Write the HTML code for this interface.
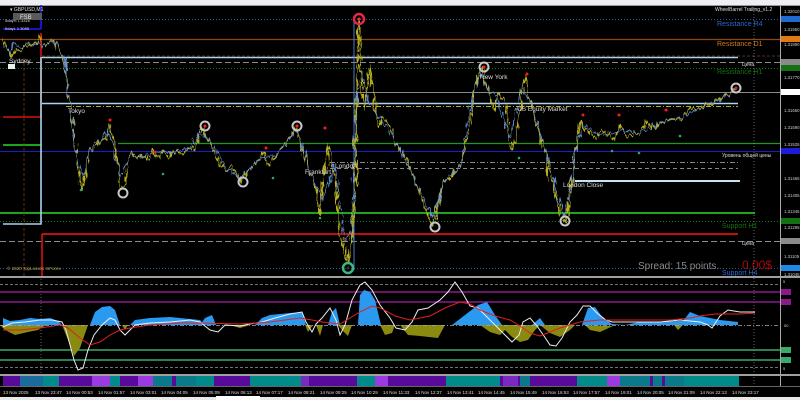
<!DOCTYPE html>
<html><head><meta charset="utf-8"><style>
html,body{margin:0;padding:0;background:#000;width:800px;height:400px;overflow:hidden}
svg{display:block;font-family:"Liberation Sans",sans-serif}
</style></head><body>
<svg width="800" height="400" viewBox="0 0 800 400" xmlns="http://www.w3.org/2000/svg">
<defs>
<filter id="jag" x="-5%" y="-10%" width="110%" height="120%">
<feTurbulence type="fractalNoise" baseFrequency="0.35 0.08" numOctaves="2" seed="3" result="n"/>
<feDisplacementMap in="SourceGraphic" in2="n" scale="9" xChannelSelector="R" yChannelSelector="G"/>
</filter>
</defs>
<rect width="800" height="400" fill="#000"/>
<rect x="0" y="0" width="800" height="5" fill="#eceef2"/>
<rect x="0" y="5" width="800" height="1" fill="#9a9a9a"/>
<line x1="0" y1="19.5" x2="780" y2="19.5" stroke="#1e5aa8" stroke-width="1" stroke-dasharray="1,2"/>
<line x1="0" y1="39.5" x2="780" y2="39.5" stroke="#8b4a14" stroke-width="1.2"/>
<line x1="42" y1="57.5" x2="738" y2="57.5" stroke="#a8d4ee" stroke-width="1.6"/>
<line x1="42" y1="56" x2="780" y2="56" stroke="#704030" stroke-width="0.8" stroke-dasharray="3,2"/>
<line x1="0" y1="62.5" x2="780" y2="62.5" stroke="#8a8a8a" stroke-width="1" stroke-dasharray="6,3"/>
<line x1="0" y1="68.5" x2="780" y2="68.5" stroke="#0a7a0a" stroke-width="1" stroke-dasharray="1,2"/>
<line x1="0" y1="92.5" x2="780" y2="92.5" stroke="#8a8a8a" stroke-width="0.9"/>
<line x1="42" y1="103.5" x2="738" y2="103.5" stroke="#a8d4ee" stroke-width="1.6"/>
<line x1="66" y1="106.5" x2="738" y2="106.5" stroke="#b8b020" stroke-width="1" stroke-dasharray="5,2,1,2"/>
<line x1="3" y1="145" x2="41" y2="145" stroke="#22dd22" stroke-width="1.6"/>
<line x1="118" y1="143.5" x2="780" y2="143.5" stroke="#1a9a1a" stroke-width="1.2"/>
<line x1="0" y1="151.5" x2="780" y2="151.5" stroke="#1c1cc8" stroke-width="1"/>
<line x1="330" y1="162.5" x2="738" y2="162.5" stroke="#888" stroke-width="1" stroke-dasharray="5,2,1,2"/>
<line x1="330" y1="168.5" x2="738" y2="168.5" stroke="#888" stroke-width="1" stroke-dasharray="4,3"/>
<line x1="575" y1="181" x2="740" y2="181" stroke="#c8e4f4" stroke-width="2"/>
<line x1="0" y1="213" x2="755" y2="213" stroke="#22dd22" stroke-width="1.6"/>
<line x1="0" y1="221.5" x2="780" y2="221.5" stroke="#0a7a0a" stroke-width="1" stroke-dasharray="1,2"/>
<line x1="42" y1="234" x2="738" y2="234" stroke="#dd1111" stroke-width="1.8"/>
<line x1="0" y1="241.5" x2="780" y2="241.5" stroke="#8a8a8a" stroke-width="1" stroke-dasharray="6,3"/>
<line x1="0" y1="268.5" x2="780" y2="268.5" stroke="#1e5aa8" stroke-width="1" stroke-dasharray="1,2"/>
<polyline points="3,117 41,117 41,33" fill="none" stroke="#dd1111" stroke-width="1.6"/>
<polyline points="3,224 41,224 41,57" fill="none" stroke="#a8d4ee" stroke-width="1.6"/>
<line x1="42" y1="234" x2="42" y2="276" stroke="#dd1111" stroke-width="1.6"/>
<line x1="3" y1="29" x2="41" y2="29" stroke="#1c1cff" stroke-width="1.5"/>
<line x1="41" y1="5" x2="41" y2="29" stroke="#1c1cff" stroke-width="1.5"/>
<line x1="24" y1="58" x2="24" y2="276" stroke="#7a3a1a" stroke-width="0.8" stroke-dasharray="3,2"/>
<line x1="41" y1="276" x2="41" y2="375" stroke="#aaa" stroke-width="0.6" stroke-dasharray="1,2"/>
<line x1="354" y1="20" x2="354" y2="270" stroke="#4a78c8" stroke-width="1"/>
<line x1="754" y1="5" x2="754" y2="386" stroke="#aaa" stroke-width="0.6" stroke-dasharray="1,2"/>
<g filter="url(#jag)">
<polyline fill="none" stroke="#b8b020" stroke-width="1.3" stroke-linejoin="round" points="3,38 8,50 12,55 16,48 20,52 25,45 30,46 33,42 37,45 40,35 43,47 48,43 53,39 58,48 63,58 66,72 69,100 72,118 76,152 79,172 82,190 86,168 90,150 95,148 100,142 105,140 110,124 114,140 118,165 121,188 125,185 128,162 133,152 138,158 143,154 148,160 153,150 158,160 163,150 168,158 172,152 177,150 182,156 188,148 193,150 198,138 203,128 207,140 211,142 215,155 220,165 225,170 230,167 236,173 240,182 245,175 250,168 255,164 260,158 264,152 268,165 272,160 277,152 282,148 287,140 292,135 296,128 300,142 304,155 308,168 312,178 316,190 320,215 323,180 326,165 328,145 332,160 336,185 340,235 344,248 348,262 351,240 355,210 357,80 359,20 361,70 364,110 367,90 370,65 373,95 376,115 380,125 385,118 390,128 395,140 400,150 404,155 408,160 412,172 417,185 422,200 427,212 432,225 436,215 440,195 445,178 450,180 455,172 460,165 465,150 470,125 475,90 478,72 482,68 486,82 490,98 494,110 498,92 503,100 507,118 511,150 515,140 519,120 522,90 525,76 528,95 532,110 537,128 541,140 545,152 549,175 553,185 557,200 561,215 565,222 569,205 573,170 577,140 580,120 584,128 590,132 596,140 602,128 608,135 614,140 619,125 623,132 628,138 634,130 640,135 646,120 652,128 658,124 663,122 668,120 674,118 680,120 686,112 692,108 698,110 704,104 710,106 716,100 722,98 728,94 733,90 736,88"/>
<polyline fill="none" stroke="#6a9ae8" stroke-width="1" opacity="0.9" points="5,45 10,52 15,44 22,48 28,42 35,45 45,45 55,42 65,60 70,105 76,155 83,175 92,145 102,140 108,128 120,178 130,155 145,156 160,152 175,152 190,148 200,133 212,142 225,168 240,178 258,160 275,155 290,138 298,130 310,172 322,200 335,165 345,240 352,230 356,100 362,75 368,100 374,110 385,125 400,148 420,190 433,218 445,180 460,168 472,100 480,72 488,90 497,95 510,140 522,86 532,105 545,150 556,190 565,215 575,155 582,125 600,135 620,130 640,133 660,122 680,118 700,108 720,100 735,90"/>
</g>
<g fill="#ff1a1a"><circle cx="110" cy="120" r="1.5"/><circle cx="155" cy="152" r="1.5"/><circle cx="205" cy="126" r="1.5"/><circle cx="266" cy="148" r="1.5"/><circle cx="297" cy="126" r="1.5"/><circle cx="325" cy="128" r="1.5"/><circle cx="484" cy="67" r="1.5"/><circle cx="527" cy="74" r="1.5"/><circle cx="583" cy="115" r="1.5"/><circle cx="619" cy="115" r="1.5"/><circle cx="666" cy="110" r="1.5"/></g>
<g fill="#2aaa6a"><circle cx="81" cy="190" r="1.3"/><circle cx="163" cy="174" r="1.3"/><circle cx="273" cy="178" r="1.3"/><circle cx="320" cy="218" r="1.3"/><circle cx="519" cy="158" r="1.3"/><circle cx="612" cy="151" r="1.3"/><circle cx="639" cy="153" r="1.3"/><circle cx="680" cy="136" r="1.3"/></g>
<g fill="none" stroke="#c8c8c8" stroke-width="2"><circle cx="123" cy="193" r="4.5"/><circle cx="205" cy="126" r="4.5"/><circle cx="243" cy="182" r="4.5"/><circle cx="297" cy="126" r="4.5"/><circle cx="435" cy="227" r="4.5"/><circle cx="484" cy="67" r="4.5"/><circle cx="565" cy="221" r="4.5"/><circle cx="736" cy="88" r="4.5"/></g>
<g fill="#ff1a1a"><circle cx="205" cy="126" r="1.4"/><circle cx="297" cy="126" r="1.4"/><circle cx="484" cy="67" r="1.4"/><circle cx="736" cy="88" r="1.4"/></g>
<circle cx="359" cy="19" r="5" fill="none" stroke="#e0284a" stroke-width="2.5"/><circle cx="359" cy="19" r="1.5" fill="#ff2a2a"/>
<circle cx="348" cy="268" r="5" fill="none" stroke="#3ab880" stroke-width="2.5"/><circle cx="348" cy="268" r="1.5" fill="#333"/>
<g font-size="6.5" fill="#ddd">
<text x="68" y="113">Tokyo</text><text x="9" y="63">Sydney</text>
<text x="480" y="79">New York</text><text x="517" y="111">US Equity Market</text>
<text x="335" y="168">London</text><text x="305" y="174">Frankfurt</text>
<text x="563" y="187">London Close</text>
</g>
<rect x="8" y="64" width="7" height="5" fill="#eee"/>
<g font-size="7">
<text x="717" y="26" fill="#2a6ad0">Resistance R4</text>
<text x="717" y="46" fill="#d87a1a">Resistance D1</text>
<text x="717" y="74" fill="#137013">Resistance H1</text>
<text x="722" y="228" fill="#137013">Support H1</text>
<text x="722" y="275" fill="#2a6ad0">Support H4</text>
</g>
<g font-size="5" fill="#ddd">
<text x="742" y="66">Цена</text><text x="742" y="245">Цена</text>
<text x="722" y="157">Уровень общей цены</text>
<text x="715" y="11">WheelBarrel Trailing_v1.2</text>
<text x="10" y="11">▾ GBPUSD,M1</text>
<text x="5" y="22" font-size="4">5dayH 1.3316</text><text x="5" y="30" font-size="4">5dayL 1.3085</text>
<text x="7" y="270" fill="#c8b040" font-size="4.5">© 2020 TopLosses InForex</text>
</g>
<rect x="13" y="13" width="29" height="7" fill="#5a5a5a"/><text x="20" y="19" font-size="6" fill="#ddd">FSB</text>
<text x="638" y="269" font-size="10" fill="#8a8a8a">Spread: 15 points.</text>
<text x="742" y="269" font-size="12" fill="#a80a0a">0.00$</text>
<rect x="780" y="6" width="1" height="380" fill="#aaa"/>
<g font-size="4.3" fill="#ccc">
<text x="784" y="13">1.32010</text><text x="784" y="31">1.31950</text><text x="784" y="46">1.31890</text><text x="784" y="79">1.31770</text><text x="784" y="112">1.31650</text><text x="784" y="129">1.31590</text><text x="784" y="180">1.31465</text><text x="784" y="197">1.31405</text><text x="784" y="213">1.31345</text><text x="784" y="229">1.31285</text><text x="784" y="258">1.31105</text><text x="784" y="276">1.31045</text><text x="784" y="146">1.31525</text>
</g>
<rect x="781" y="16" width="19" height="6" fill="#1e6ad0"/><rect x="781" y="36" width="19" height="6" fill="#e07a10"/><rect x="781" y="59" width="19" height="6" fill="#8a8a8a"/><rect x="781" y="65" width="19" height="6" fill="#137013"/><rect x="781" y="89" width="19" height="6" fill="#fff"/><rect x="781" y="148" width="19" height="6" fill="#1c1cd8"/><rect x="781" y="218" width="19" height="6" fill="#137013"/><rect x="781" y="238" width="19" height="6" fill="#8a8a8a"/><rect x="781" y="265" width="19" height="6" fill="#1e8ae8"/>
<rect x="0" y="276" width="800" height="2" fill="#a0a0a0"/>
<line x1="0" y1="284.5" x2="780" y2="284.5" stroke="#999" stroke-dasharray="3,2" stroke-width="0.8"/>
<line x1="0" y1="292" x2="780" y2="292" stroke="#8a1a8a" stroke-width="1.4"/>
<line x1="0" y1="302" x2="780" y2="302" stroke="#8a1a8a" stroke-width="1.4"/>
<line x1="0" y1="350" x2="780" y2="350" stroke="#3aaa6a" stroke-width="1.4"/>
<line x1="0" y1="360" x2="780" y2="360" stroke="#3aaa6a" stroke-width="1.4"/>
<line x1="0" y1="367.5" x2="780" y2="367.5" stroke="#999" stroke-dasharray="3,2" stroke-width="0.8"/>
<path fill="#2a9af0" d="M3,325 L3,318 10,321 20,320 30,318 40,319 50,318 58,321 62,325 Z M90,325 L95,312 102,307 110,306 115,310 120,325 Z M130,325 L135,320 150,318 170,317 190,319 200,320 205,325 Z M200,325 L205,318 212,315 216,325Z M255,325 L262,318 270,315 280,314 290,313 302,312 306,325Z M328,325 L332,312 336,308 340,325Z M358,325 L360,295 364,290 370,292 375,300 381,325Z M452,325 L465,315 478,305 487,302 495,315 502,325Z M532,325 L540,318 545,325Z M582,325 L588,308 595,307 603,318 612,324 625,325Z M625,325 L640,322 720,320 738,322 738,325 Z M680,325 L690,312 700,316 720,320Z"/>
<path fill="#8a8a10" d="M62,325 L68,340 74,356 80,348 88,325Z M122,325 L125,330 128,325Z M220,325 L230,325 240,328 250,325Z M305,325 L308,332 313,325Z M316,325 L320,336 323,325Z M338,325 L342,330 348,336 352,325Z M400,325 L408,335 420,336 438,338 445,325Z M540,325 L550,333 560,337 570,330 575,325Z M585,325 L590,330 600,332 613,326Z M674,325 L678,330 683,325Z M480,325 L490,332 500,335 505,330 512,337 520,342 528,340 535,330 540,325Z M380,325 L385,335 392,333 395,325Z M0,325 L5,330 15,335 28,332 38,330 46,325Z"/>
<line x1="0" y1="325.5" x2="780" y2="325.5" stroke="#aaa" stroke-dasharray="4,2,1,2" stroke-width="0.8"/>
<polyline fill="none" stroke="#eee" stroke-width="1" points="3,327 12,323 25,322 40,320 52,320 62,322 66,330 70,345 74,360 78,370 83,368 88,350 94,335 102,325 110,318 115,320 120,330 125,335 130,330 135,325 150,323 170,322 190,320 200,322 210,330 218,332 225,325 240,326 250,324 262,322 275,318 290,314 302,312 306,322 312,332 316,324 322,318 330,308 336,320 340,335 345,325 352,300 360,285 365,282 372,290 380,305 390,318 396,328 405,330 412,322 418,310 428,308 440,300 448,292 455,282 462,292 470,306 478,308 485,315 492,322 498,328 505,335 512,342 519,335 523,322 530,318 537,326 544,336 550,345 556,346 562,338 570,322 577,315 583,306 590,306 598,314 606,320 612,322 620,322 640,322 660,322 680,320 700,322 708,325 712,328 720,316 728,310 740,312 755,312"/>
<polyline fill="none" stroke="#e02020" stroke-width="1" points="3,330 20,330 40,328 60,325 68,328 80,338 90,345 100,342 110,335 120,330 130,328 150,325 180,323 200,323 240,324 270,322 300,318 312,320 322,322 340,324 360,312 372,306 380,308 388,312 395,316 410,320 430,316 445,308 460,302 470,304 480,310 495,316 510,320 520,326 530,333 540,336 550,332 560,328 570,325 580,322 600,320 640,320 670,320 690,318 700,316 715,314 740,314 755,313"/>
<g font-size="4" fill="#ccc"><text x="784" y="327">50</text><text x="783" y="283">5</text><text x="783" y="370">5</text></g>
<rect x="781" y="289" width="10" height="6" fill="#8a1a8a"/><rect x="781" y="299" width="10" height="6" fill="#8a1a8a"/><rect x="781" y="347" width="10" height="6" fill="#3aaa6a"/><rect x="781" y="357" width="10" height="6" fill="#3aaa6a"/>
<rect x="0" y="374" width="800" height="2" fill="#a0a0a0"/>
<g>
<rect x="3" y="376" width="736" height="10" fill="#5a0a9a"/>
<rect x="20" y="376" width="23" height="10" fill="#1a6a9a"/><rect x="43" y="376" width="16" height="10" fill="#008a8a"/>
<rect x="92" y="376" width="18" height="10" fill="#9a3ae0"/><rect x="110" y="376" width="10" height="10" fill="#008a8a"/>
<rect x="138" y="376" width="15" height="10" fill="#9a3ae0"/><rect x="153" y="376" width="43" height="10" fill="#0a7a8a"/><rect x="172" y="376" width="4" height="10" fill="#5a0a9a"/><rect x="196" y="376" width="18" height="10" fill="#008a8a"/>
<rect x="250" y="376" width="51" height="10" fill="#008a8a"/><rect x="301" y="376" width="8" height="10" fill="#7a2ac0"/>
<rect x="357" y="376" width="18" height="10" fill="#008a8a"/><rect x="375" y="376" width="13" height="10" fill="#9a3ae0"/>
<rect x="446" y="376" width="54" height="10" fill="#008a8a"/><rect x="503" y="376" width="15" height="10" fill="#7a2ac0"/><rect x="520" y="376" width="10" height="10" fill="#0a7a8a"/>
<rect x="577" y="376" width="30" height="10" fill="#008a8a"/><rect x="607" y="376" width="13" height="10" fill="#9a3ae0"/><rect x="620" y="376" width="64" height="10" fill="#0a7a8a"/><rect x="650" y="376" width="3" height="10" fill="#5a0a9a"/><rect x="662" y="376" width="3" height="10" fill="#5a0a9a"/><rect x="684" y="376" width="55" height="10" fill="#008a8a"/>
</g>
<rect x="0" y="386" width="800" height="1" fill="#666"/>
<g font-size="4.5" fill="#ddd">
<text x="3" y="394">13 Nov 2025</text><text x="35" y="394">13 Nov 23:47</text><text x="66" y="394">14 Nov 00:53</text><text x="98" y="394">14 Nov 01:57</text><text x="130" y="394">14 Nov 03:01</text><text x="161" y="394">14 Nov 04:05</text><text x="193" y="394">14 Nov 05:09</text><text x="225" y="394">14 Nov 06:13</text><text x="256" y="394">14 Nov 07:17</text><text x="288" y="394">14 Nov 08:21</text><text x="320" y="394">14 Nov 09:25</text><text x="351" y="394">14 Nov 10:29</text><text x="383" y="394">14 Nov 11:33</text><text x="415" y="394">14 Nov 12:37</text><text x="447" y="394">14 Nov 13:41</text><text x="478" y="394">14 Nov 14:45</text><text x="510" y="394">14 Nov 15:49</text><text x="542" y="394">14 Nov 16:53</text><text x="573" y="394">14 Nov 17:57</text><text x="605" y="394">14 Nov 19:01</text><text x="637" y="394">14 Nov 20:05</text><text x="668" y="394">14 Nov 21:09</text><text x="700" y="394">14 Nov 22:13</text><text x="732" y="394">14 Nov 23:17</text>
</g>
<rect x="0" y="397" width="800" height="3" fill="#e8e8e8"/>
<rect x="216" y="396" width="44" height="4" fill="#fff"/>
</svg>
</body></html>
